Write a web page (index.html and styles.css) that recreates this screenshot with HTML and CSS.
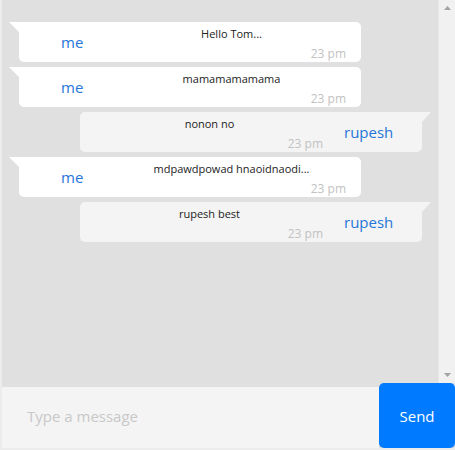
FILE: index.html
```html
<!DOCTYPE html>
<html>
<head>
<meta charset="utf-8">
<link rel="stylesheet" href="styles.css">
</head>
<body>
<div class="app">
  <div class="chat">
    <div class="messages">
      <div class="msg me">
        <div class="name">me</div>
        <div class="content">
          <div class="text">Hello Tom...</div>
          <div class="time">23 pm</div>
        </div>
      </div>
      <div class="msg me">
        <div class="name">me</div>
        <div class="content">
          <div class="text">mamamamamama</div>
          <div class="time">23 pm</div>
        </div>
      </div>
      <div class="msg them">
        <div class="content">
          <div class="text">nonon no</div>
          <div class="time">23 pm</div>
        </div>
        <div class="name">rupesh</div>
      </div>
      <div class="msg me">
        <div class="name">me</div>
        <div class="content">
          <div class="text">mdpawdpowad hnaoidnaodi...</div>
          <div class="time">23 pm</div>
        </div>
      </div>
      <div class="msg them">
        <div class="content">
          <div class="text">rupesh best</div>
          <div class="time">23 pm</div>
        </div>
        <div class="name">rupesh</div>
      </div>
    </div>
    <div class="scrollbar">
      <svg class="arrow" width="17" height="17" viewBox="0 0 17 17"><path d="M5 10 L8.5 6 L12 10 Z" fill="#a3a3a3"/></svg>
      <svg class="arrow" width="17" height="17" viewBox="0 0 17 17"><path d="M5 7 L8.5 11 L12 7 Z" fill="#a3a3a3"/></svg>
    </div>
  </div>
  <div class="footer">
    <div class="input">Type a message</div>
    <button class="send">Send</button>
  </div>
</div>
</body>
</html>
```

FILE: styles.css
```css
html, body {
  margin: 0;
  padding: 0;
}
body {
  background: #ececec;
  font-family: "Open Sans", "Noto Sans", sans-serif;
  width: 455px;
  height: 450px;
  overflow: hidden;
}
.app {
  margin-left: 2px;
  width: 453px;
  height: 448px;
  display: flex;
  flex-direction: column;
}
.chat {
  height: 383px;
  display: flex;
  background: #e0e0e0;
}
.messages {
  flex: 1;
  padding: 22px 16px 0 17px;
  display: flex;
  flex-direction: column;
  gap: 5px;
}
.scrollbar {
  width: 17px;
  box-sizing: border-box;
  background: #f1f1f1;
  border-left: 1px solid #e8e8e8;
  display: flex;
  flex-direction: column;
  justify-content: space-between;
  flex-shrink: 0;
}
.arrow {
  display: block;
}
.msg {
  position: relative;
  width: 342px;
  height: 40px;
  display: flex;
  align-items: center;
  border-radius: 5px;
}
.msg.me {
  background: #ffffff;
  border-top-left-radius: 0;
}
.msg.them {
  background: #f4f4f4;
  align-self: flex-end;
  border-top-right-radius: 0;
}
.msg::before {
  content: "";
  position: absolute;
  top: 0;
  width: 0;
  height: 0;
  border-top: 10px solid transparent;
}
.msg.me::before {
  left: -10px;
  border-top-color: #ffffff;
  border-left: 10px solid transparent;
}
.msg.them::before {
  right: -9px;
  border-top-color: #f4f4f4;
  border-right: 9px solid transparent;
}
.name {
  width: 83px;
  box-sizing: border-box;
  font-size: 15px;
  color: #2676d8;
  flex-shrink: 0;
}
.me .name {
  padding-left: 42px;
}
.them .name {
  padding-left: 5px;
}
.content {
  flex: 1;
  align-self: stretch;
  display: flex;
  flex-direction: column;
  padding-top: 4px;
}
.text {
  font-size: 11px;
  line-height: 15px;
  color: #222;
  text-align: center;
}
.time {
  font-size: 12px;
  line-height: 16px;
  color: #c2c2c2;
  text-align: right;
  padding-right: 15px;
  margin-top: 5px;
}
.them .time {
  padding-right: 16px;
}
.footer {
  height: 65px;
  display: flex;
  align-items: flex-end;
  background: #e0e0e0;
}
.input {
  flex: 1;
  height: 61px;
  background: #f4f4f4;
  box-sizing: border-box;
  padding-left: 25px;
  padding-bottom: 4px;
  display: flex;
  align-items: center;
  font-size: 15px;
  color: #c8c8c8;
}
.send {
  width: 76px;
  height: 65px;
  border: none;
  border-radius: 5px;
  background: #007bff;
  color: #ffffff;
  font-family: "Open Sans", "Noto Sans", sans-serif;
  font-size: 15px;
  padding: 0;
}
```
